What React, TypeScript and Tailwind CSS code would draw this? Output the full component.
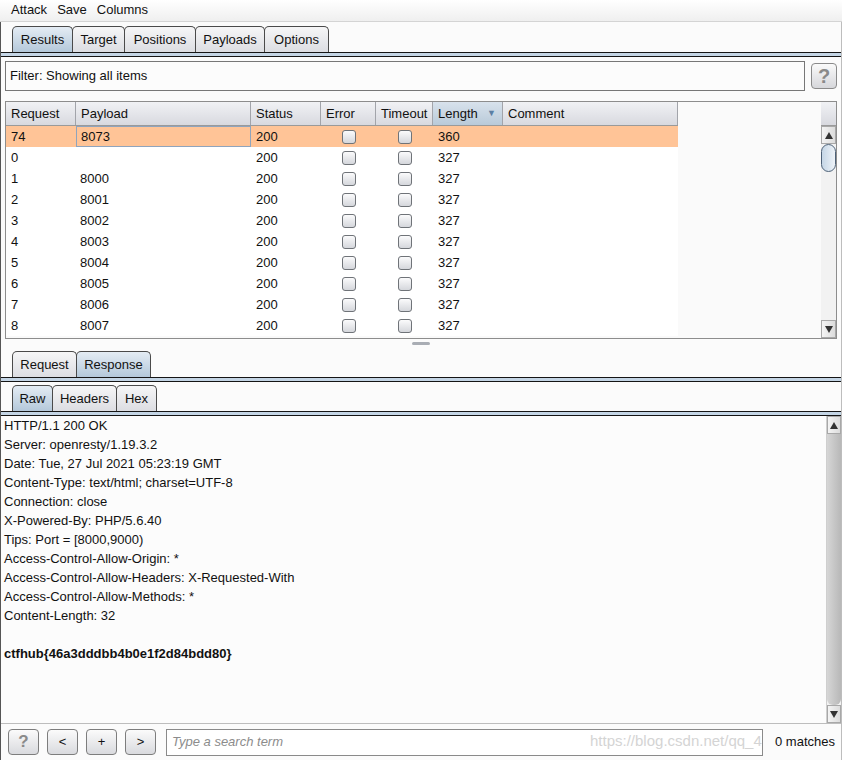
import React from 'react'

const font = { fontFamily: '"Liberation Sans", Arial, sans-serif' }

function Tab({ label, active, w }: { label: string; active?: boolean; w: string }) {
  return (
    <div
      className={`${w} h-[26px] -mr-px flex items-center justify-center rounded-t-[5px] border border-b-0 border-[#4a4a4a] text-[13px] text-[#111] ${
        active ? 'bg-gradient-to-b from-[#e4ecf4] to-[#b4c8da]' : 'bg-gradient-to-b from-[#f6f6f7] to-[#dcdde2]'
      }`}
    >
      {label}
    </div>
  )
}

function Divider() {
  return <div className="h-[5px] border-y border-[#151515] bg-[#c4d5e5]" />
}

function Check() {
  return (
    <div className="w-[14px] h-[14px] rounded-[3px] border border-[#6f7378] bg-gradient-to-b from-[#fbfbfc] to-[#d5d7dc]" />
  )
}

function Arrow({ up }: { up?: boolean }) {
  return (
    <div className="h-[18px] flex items-center justify-center bg-gradient-to-r from-[#f4f4f4] to-[#dcdcdc] border border-[#a8a8a8]">
      <svg width="8" height="7" viewBox="0 0 8 7">
        <path d={up ? 'M4 0 L8 7 L0 7 Z' : 'M0 0 L8 0 L4 7 Z'} fill="#333" />
      </svg>
    </div>
  )
}

const cols = [
  { name: 'Request', w: 'w-[70px]' },
  { name: 'Payload', w: 'w-[175px]' },
  { name: 'Status', w: 'w-[70px]' },
  { name: 'Error', w: 'w-[55px]' },
  { name: 'Timeout', w: 'w-[57px]' },
  { name: 'Length', w: 'w-[70px]' },
  { name: 'Comment', w: 'w-[175px]' },
]

const rows = [
  ['74', '8073', '360'],
  ['0', '', '327'],
  ['1', '8000', '327'],
  ['2', '8001', '327'],
  ['3', '8002', '327'],
  ['4', '8003', '327'],
  ['5', '8004', '327'],
  ['6', '8005', '327'],
  ['7', '8006', '327'],
  ['8', '8007', '327'],
]

const response = [
  'HTTP/1.1 200 OK',
  'Server: openresty/1.19.3.2',
  'Date: Tue, 27 Jul 2021 05:23:19 GMT',
  'Content-Type: text/html; charset=UTF-8',
  'Connection: close',
  'X-Powered-By: PHP/5.6.40',
  'Tips: Port = [8000,9000)',
  'Access-Control-Allow-Origin: *',
  'Access-Control-Allow-Headers: X-Requested-With',
  'Access-Control-Allow-Methods: *',
  'Content-Length: 32',
]

function SmallButton({ children }: { children: React.ReactNode }) {
  return (
    <div className="w-[31px] h-[26px] flex items-center justify-center rounded-[4px] border border-[#7d7d7d] bg-gradient-to-b from-[#fbfbfb] to-[#d9dade] text-[13px] text-[#111]">
      {children}
    </div>
  )
}

export default function App() {
  return (
    <div className="w-[842px] h-[760px] bg-[#fbfbfb] flex flex-col overflow-hidden relative" style={font}>
      {/* menu */}
      <div className="h-[22px] flex items-center gap-[10px] pl-[11px] pb-[2px] text-[13px] text-[#111] bg-gradient-to-b from-white to-[#efefef] border-b border-[#d4d4d4]">
        <span>Attack</span>
        <span>Save</span>
        <span>Columns</span>
      </div>

      <div className="flex-1 flex flex-col border-l border-[#555] border-r border-r-[#bdbdbd]">
        <div className="flex pl-[11px] pt-[4px]">
          <Tab label="Results" active w="w-[61px]" />
          <Tab label="Target" w="w-[53px]" />
          <Tab label="Positions" w="w-[72px]" />
          <Tab label="Payloads" w="w-[70px]" />
          <Tab label="Options" w="w-[65px]" />
        </div>
        <Divider />

        {/* filter */}
        <div className="flex items-center gap-[6px] pl-[4px] pr-[4px] pt-[4px]">
          <div className="w-[800px] h-[30px] border border-[#777] bg-[#fcfcfc] flex items-center pl-[4px] text-[13px] text-[#111]">
            Filter: Showing all items
          </div>
          <div className="w-[26px] h-[26px] rounded-[4px] border border-[#8a8a8a] bg-gradient-to-b from-[#fafafa] to-[#d6d7db] flex items-center justify-center text-[20px] font-bold text-[#8a8a8a]">
            ?
          </div>
        </div>

        {/* table */}
        <div className="mx-[4px] mt-[10px] h-[238px] border border-[#8d8d8d] flex">
          <div className="w-[817px] flex flex-col bg-[#fafafa]">
            <div className="w-[672px] h-[24px] flex bg-gradient-to-b from-[#f1f2f5] to-[#d8d9df] border-b border-[#9a9a9a]">
              {cols.map((c) => (
                <div
                  key={c.name}
                  className={`${c.w} h-full flex items-center pl-[5px] pr-[6px] justify-between border-r border-[#a2a4aa] text-[13px] text-[#111] ${
                    c.name === 'Length' ? 'bg-gradient-to-b from-[#d8e2ec] to-[#b9cad9]' : ''
                  }`}
                >
                  <span>{c.name}</span>
                  {c.name === 'Length' && <span className="text-[9px] text-[#5b7fa3]">▼</span>}
                </div>
              ))}
            </div>
            {rows.map((r, i) => (
              <div
                key={i}
                className={`w-[672px] h-[21px] flex text-[13px] text-[#111] ${i === 0 ? 'bg-[#ffc497]' : 'bg-white'}`}
              >
                <div className="w-[70px] flex items-center pl-[5px]">{r[0]}</div>
                <div
                  className={`w-[175px] flex items-center pl-[4px] ${i === 0 ? 'border border-[#8fa4bd]' : ''}`}
                >
                  {r[1]}
                </div>
                <div className="w-[70px] flex items-center pl-[5px]">200</div>
                <div className="w-[55px] flex items-center justify-center">
                  <Check />
                </div>
                <div className="w-[57px] flex items-center justify-center">
                  <Check />
                </div>
                <div className="w-[70px] flex items-center pl-[5px]">{r[2]}</div>
                <div className="w-[175px]" />
              </div>
            ))}
          </div>
          <div className="w-[15px] flex flex-col bg-[#f2f2f2]">
            <div className="h-[24px] bg-gradient-to-b from-[#f1f2f5] to-[#d8d9df] border-b border-[#9a9a9a]" />
            <Arrow up />
            <div className="h-[28px] rounded-[14px] border border-[#4e6278] bg-gradient-to-r from-[#c5d6e6] to-[#eef3f8]" />
            <div className="flex-1" />
            <Arrow />
          </div>
        </div>

        {/* split pane grip */}
        <div className="h-[9px] flex justify-center items-center">
          <div className="w-[18px] h-[3px] rounded-[2px] bg-[#a9adb4]" />
        </div>

        <div className="flex pl-[11px] pt-[3px]">
          <Tab label="Request" w="w-[65px]" />
          <Tab label="Response" active w="w-[75px]" />
        </div>
        <Divider />
        <div className="flex pl-[11px] pt-[3px]">
          <Tab label="Raw" active w="w-[41px]" />
          <Tab label="Headers" w="w-[65px]" />
          <Tab label="Hex" w="w-[41px]" />
        </div>
        <Divider />

        {/* response body */}
        <div className="h-[307px] flex bg-[#fcfcfc]">
          <div className="flex-1 pl-[3px] text-[13px] leading-[19px] text-[#111]">
            {response.map((l) => (
              <div key={l}>{l}</div>
            ))}
            <div className="h-[19px]" />
            <div className="font-bold">ctfhub{'{'}46a3dddbb4b0e1f2d84bdd80{'}'}</div>
          </div>
          <div className="w-[15px] flex flex-col bg-[#f2f2f2] border-l border-[#cfcfcf]">
            <Arrow up />
            <div className="flex-1 rounded-b-[6px] bg-gradient-to-r from-[#d6d6d6] to-[#b8b8b8]" />
            <Arrow />
          </div>
        </div>

        {/* search bar */}
        <div className="flex-1 flex items-center pl-[7px] gap-[8px] border-t border-[#bdbdbd]">
          <SmallButton>
            <span className="text-[17px] font-bold text-[#8a8a8a]">?</span>
          </SmallButton>
          <SmallButton>&lt;</SmallButton>
          <SmallButton>+</SmallButton>
          <SmallButton>&gt;</SmallButton>
          <div className="ml-[2px] w-[597px] h-[27px] border border-[#8a8a8a] bg-white flex items-center pl-[5px] text-[13px] italic text-[#8c8c8c]">
            Type a search term
          </div>
          <div className="relative ml-[4px] text-[13px] text-[#111]">0 matches</div>
        </div>
      </div>

      <div className="absolute left-[590px] top-[730px] text-[15px] text-[#d4d4d4] pointer-events-none whitespace-nowrap">
        https://blog.csdn.net/qq_4
      </div>
    </div>
  )
}
